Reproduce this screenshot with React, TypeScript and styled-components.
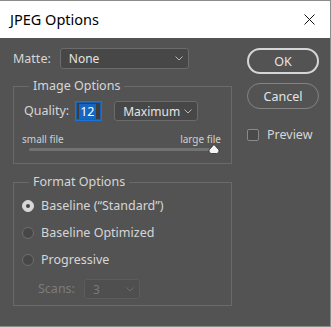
import React from "react";
import styled, { createGlobalStyle } from "styled-components";

const Global = createGlobalStyle`
  html, body { margin: 0; padding: 0; background: #535353; }
  body { font-family: "Noto Sans", "Open Sans", sans-serif; }
`;

const Window = styled.div`
  width: 331px;
  height: 327px;
  box-sizing: border-box;
  border: 1px solid #8c8c8c;
  border-left: none;
  background: #535353;
  display: flex;
  flex-direction: column;
  overflow: hidden;
`;

const TitleBar = styled.div`
  height: 37px;
  background: #ffffff;
  display: flex;
  align-items: center;
  justify-content: space-between;
  padding: 0 15px 0 10px;
  flex-shrink: 0;
`;

const Title = styled.span`
  font-family: "Noto Sans", sans-serif;
  font-size: 14.5px;
  color: #000;
  margin-top: -1px;
`;

const Body = styled.div`
  display: flex;
  padding: 10px 0 0 13px;
  gap: 15px;
  color: #d6d6d6;
  font-size: 12px;
`;

const LeftCol = styled.div`
  width: 219px;
  display: flex;
  flex-direction: column;
`;

const RightCol = styled.div`
  width: 72px;
  display: flex;
  flex-direction: column;
  gap: 9px;
`;

const Row = styled.div<{ $gap?: number; $indent?: number; $top?: number }>`
  display: flex;
  align-items: center;
  gap: ${(p) => p.$gap ?? 8}px;
  padding-left: ${(p) => p.$indent ?? 0}px;
  margin-top: ${(p) => p.$top ?? 0}px;
`;

const Label = styled.span<{ $disabled?: boolean }>`
  color: ${(p) => (p.$disabled ? "#7c7c7c" : "#d6d6d6")};
  font-size: 12.5px;
  line-height: 16px;
`;

const SelectBox = styled.div<{ $w: number; $h?: number; $disabled?: boolean; $ml?: number }>`
  width: ${(p) => p.$w}px;
  height: ${(p) => p.$h ?? 21}px;
  margin-left: ${(p) => p.$ml ?? 0}px;
  box-sizing: border-box;
  border: 1px solid ${(p) => (p.$disabled ? "#5c5c5c" : "#6b6b6b")};
  border-radius: 3px;
  background: ${(p) => (p.$disabled ? "#4f4f4f" : "#474747")};
  display: flex;
  align-items: center;
  justify-content: space-between;
  padding: 0 5px 0 8px;
  color: ${(p) => (p.$disabled ? "#7a7a7a" : "#e4e4e4")};
  font-size: 12px;
`;

const Chevron = ({ color = "#b8b8b8" }: { color?: string }) => (
  <svg width="8" height="5" viewBox="0 0 8 5">
    <polyline points="0.5,0.5 4,4 7.5,0.5" fill="none" stroke={color} strokeWidth="1" />
  </svg>
);

const Group = styled.fieldset<{ $h: number }>`
  margin: 0;
  padding: 0;
  border: 1px solid #6a6a6a;
  height: ${(p) => p.$h}px;
  box-sizing: border-box;
  min-width: 0;
`;

const Legend = styled.legend`
  margin-left: 15px;
  padding: 0 4px;
  color: #d6d6d6;
  font-size: 12.5px;
  line-height: 18px;
`;

const Spacer = styled.div<{ $h: number }>`
  height: ${(p) => p.$h}px;
  flex-shrink: 0;
`;

const QualityInput = styled.div`
  width: 27px;
  height: 20px;
  box-sizing: border-box;
  border: 1px solid #1a73d9;
  box-shadow: inset 0 0 0 1px #1a5fb0;
  background: #3d3d3d;
  display: flex;
  align-items: center;
  padding-left: 3px;
`;

const Selected = styled.span`
  background: #1665c0;
  color: #fff;
  font-size: 12.5px;
  line-height: 15px;
  padding: 0 1px;
`;

const SliderLabels = styled.div`
  display: flex;
  justify-content: space-between;
  padding: 0 10px 0 8px;
  font-size: 10px;
  color: #cfcfcf;
  line-height: 13px;
`;

const Track = styled.div`
  position: relative;
  margin: 2px 16px 0 15px;
  height: 3px;
  background: #727272;
  border-radius: 2px;
`;

const Thumb = styled.svg`
  position: absolute;
  right: -5px;
  top: -4px;
`;

const RadioRow = styled.div`
  display: flex;
  align-items: center;
  gap: 7px;
  padding-left: 8px;
  height: 27px;
`;

const RadioCircle = styled.span<{ $on?: boolean }>`
  width: 12px;
  height: 12px;
  box-sizing: border-box;
  border-radius: 50%;
  border: 1px solid ${(p) => (p.$on ? "#d8d8d8" : "#6e6e6e")};
  background: ${(p) => (p.$on ? "#d8d8d8" : "#474747")};
  display: flex;
  align-items: center;
  justify-content: center;
  &::after {
    content: "";
    width: 4px;
    height: 4px;
    border-radius: 50%;
    background: ${(p) => (p.$on ? "#454545" : "transparent")};
  }
`;

const Button = styled.div<{ $default?: boolean }>`
  height: 26px;
  box-sizing: border-box;
  border-radius: 13px;
  border: ${(p) => (p.$default ? "2px solid #d6d6d6" : "1px solid #858585")};
  display: flex;
  align-items: center;
  justify-content: center;
  color: #e4e4e4;
  font-size: 12.5px;
`;

const CheckRow = styled.div`
  display: flex;
  align-items: center;
  gap: 8px;
  margin-top: 9px;
`;

const CheckBox = styled.span`
  width: 12px;
  height: 12px;
  box-sizing: border-box;
  border: 1px solid #8a8a8a;
  border-radius: 2px;
  background: #4a4a4a;
`;

export default function App() {
  return (
    <>
      <Global />
      <Window>
        <TitleBar>
          <Title>JPEG Options</Title>
          <svg width="11" height="11" viewBox="0 0 11 11">
            <path d="M0.5 0.5 L10.5 10.5 M10.5 0.5 L0.5 10.5" stroke="#111" strokeWidth="1" />
          </svg>
        </TitleBar>
        <Body>
          <LeftCol>
            <Row $gap={9}>
              <Label>Matte:</Label>
              <SelectBox $w={129}>
                <span>None</span>
                <Chevron />
              </SelectBox>
            </Row>
            <Spacer $h={8} />
            <Group $h={87}>
              <Legend>Image Options</Legend>
              <Row $gap={6} $indent={10} $top={6}>
                <Label>Quality:</Label>
                <QualityInput>
                  <Selected>12</Selected>
                </QualityInput>
                <SelectBox $w={84} $h={20} $ml={6}>
                  <span>Maximum</span>
                  <Chevron />
                </SelectBox>
              </Row>
              <Spacer $h={12} />
              <SliderLabels>
                <span>small file</span>
                <span>large file</span>
              </SliderLabels>
              <Track>
                <Thumb width="12" height="10" viewBox="0 0 12 10">
                  <path d="M6 0.5 L11 6 Q11.5 9.5 8.5 9.5 L3.5 9.5 Q0.5 9.5 1 6 Z" fill="#f4f4f4" stroke="#2a2a2a" strokeWidth="0.8" />
                </Thumb>
              </Track>
            </Group>
            <Spacer $h={9} />
            <Group $h={133}>
              <Legend>Format Options</Legend>
              <Spacer $h={1} />
              <RadioRow>
                <RadioCircle $on />
                <Label>Baseline (“Standard”)</Label>
              </RadioRow>
              <RadioRow>
                <RadioCircle />
                <Label>Baseline Optimized</Label>
              </RadioRow>
              <RadioRow>
                <RadioCircle />
                <Label>Progressive</Label>
              </RadioRow>
              <Row $gap={9} $indent={24} $top={6}>
                <Label $disabled>Scans:</Label>
                <SelectBox $w={56} $h={20} $disabled>
                  <span>3</span>
                  <Chevron color="#6e6e6e" />
                </SelectBox>
              </Row>
            </Group>
          </LeftCol>
          <RightCol>
            <Button $default>OK</Button>
            <Button>Cancel</Button>
            <CheckRow>
              <CheckBox />
              <Label>Preview</Label>
            </CheckRow>
          </RightCol>
        </Body>
      </Window>
    </>
  );
}
